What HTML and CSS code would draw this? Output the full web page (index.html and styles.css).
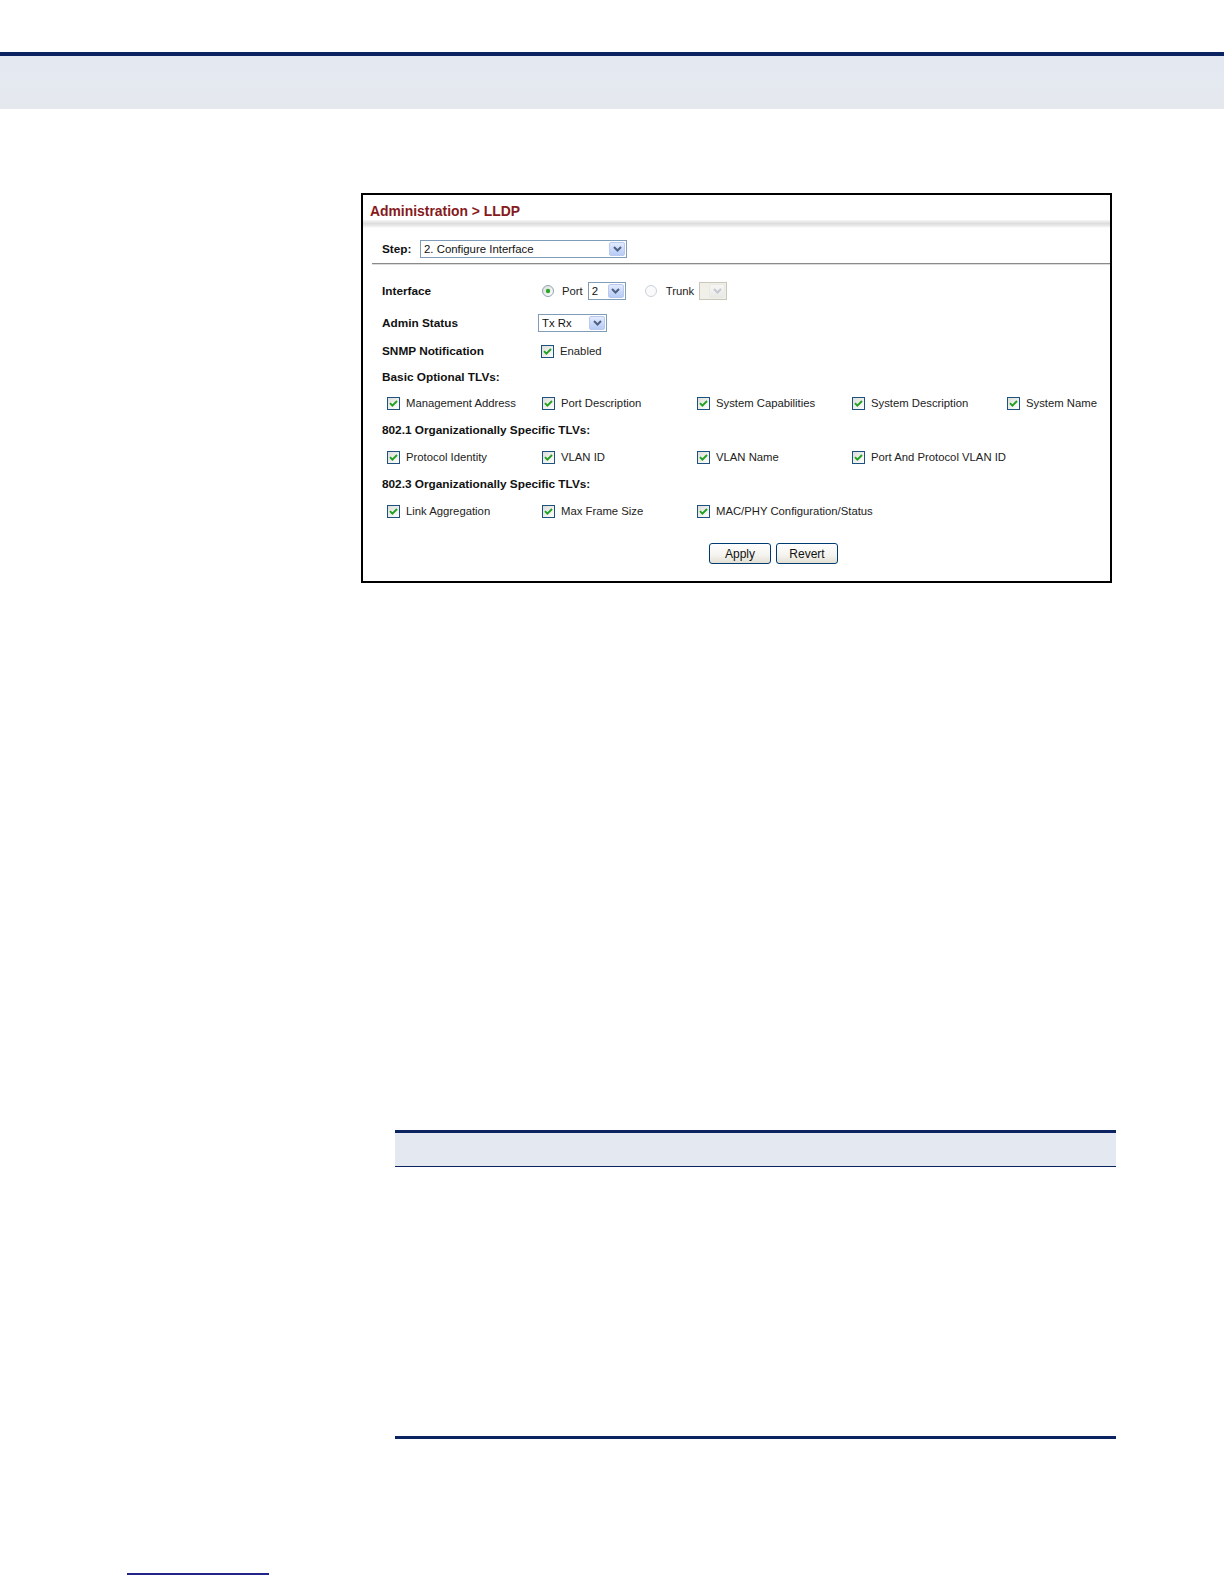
FILE: index.html
```html
<!DOCTYPE html>
<html lang="en">
<head>
<meta charset="utf-8">
<title>Administration &gt; LLDP</title>
<link rel="stylesheet" href="styles.css">
</head>
<body>
<header class="page-head"></header>

<figure class="shot">
  <div class="shot-title">Administration &gt; LLDP</div>
  <div class="shot-shadow"></div>
  <div class="step-row">
    <span class="lbl step-lbl">Step:</span>
    <div class="select sel-step"><span class="sel-text">2. Configure Interface</span><span class="sel-btn"><svg width="9" height="6" viewBox="0 0 9 6"><path d="M1 1 L4.5 4.5 L8 1" fill="none" stroke="#4d6185" stroke-width="2"/></svg></span></div>
  </div>
  <div class="sep"></div>

  <div class="form">
    <div class="row">
      <span class="lbl">Interface</span>
      <div class="ctrl iface">
        <svg class="radio" width="12" height="12" viewBox="0 0 12 12"><defs><linearGradient id="rg" x1="0" y1="0" x2="1" y2="1"><stop offset="0" stop-color="#dcdcd7"/><stop offset="1" stop-color="#ffffff"/></linearGradient></defs><circle cx="6" cy="6" r="5.5" fill="url(#rg)" stroke="#8ea3b7"/><circle cx="6" cy="6" r="2.2" fill="#2fa52f"/></svg>
        <span class="txt port-txt">Port</span>
        <div class="select sel-port"><span class="sel-text">2</span><span class="sel-btn"><svg width="9" height="6" viewBox="0 0 9 6"><path d="M1 1 L4.5 4.5 L8 1" fill="none" stroke="#4d6185" stroke-width="2"/></svg></span></div>
        <svg class="radio radio-off" width="12" height="12" viewBox="0 0 12 12"><circle cx="6" cy="6" r="5.5" fill="#fafafa" stroke="#c9d2dc"/></svg>
        <span class="txt trunk-txt">Trunk</span>
        <div class="select sel-trunk"><span class="sel-text"></span><span class="sel-btn sel-btn-off"><svg width="9" height="6" viewBox="0 0 9 6"><path d="M1 1 L4.5 4.5 L8 1" fill="none" stroke="#c4c8d0" stroke-width="2"/></svg></span></div>
      </div>
    </div>

    <div class="row r-admin">
      <span class="lbl">Admin Status</span>
      <div class="ctrl">
        <div class="select sel-admin"><span class="sel-text">Tx Rx</span><span class="sel-btn"><svg width="9" height="6" viewBox="0 0 9 6"><path d="M1 1 L4.5 4.5 L8 1" fill="none" stroke="#4d6185" stroke-width="2"/></svg></span></div>
      </div>
    </div>

    <div class="row r-snmp">
      <span class="lbl">SNMP Notification</span>
      <div class="ctrl snmp">
        <label class="chk"><svg width="13" height="13" viewBox="0 0 13 13"><defs><linearGradient id="cg" x1="0" y1="0" x2="1" y2="1"><stop offset="0" stop-color="#dcdcd7"/><stop offset="1" stop-color="#ffffff"/></linearGradient></defs><rect x="0.5" y="0.5" width="12" height="12" fill="url(#cg)" stroke="#1c5180"/><polyline points="3,6.2 5.4,8.6 10,4" fill="none" stroke="#21a121" stroke-width="1.9"/></svg><span class="txt">Enabled</span></label>
      </div>
    </div>

    <div class="row heading"><span class="lbl">Basic Optional TLVs:</span></div>
    <div class="row checks">
      <label class="chk"><svg width="13" height="13" viewBox="0 0 13 13"><rect x="0.5" y="0.5" width="12" height="12" fill="url(#cg)" stroke="#1c5180"/><polyline points="3,6.2 5.4,8.6 10,4" fill="none" stroke="#21a121" stroke-width="1.9"/></svg><span class="txt">Management Address</span></label>
      <label class="chk"><svg width="13" height="13" viewBox="0 0 13 13"><rect x="0.5" y="0.5" width="12" height="12" fill="url(#cg)" stroke="#1c5180"/><polyline points="3,6.2 5.4,8.6 10,4" fill="none" stroke="#21a121" stroke-width="1.9"/></svg><span class="txt">Port Description</span></label>
      <label class="chk"><svg width="13" height="13" viewBox="0 0 13 13"><rect x="0.5" y="0.5" width="12" height="12" fill="url(#cg)" stroke="#1c5180"/><polyline points="3,6.2 5.4,8.6 10,4" fill="none" stroke="#21a121" stroke-width="1.9"/></svg><span class="txt">System Capabilities</span></label>
      <label class="chk"><svg width="13" height="13" viewBox="0 0 13 13"><rect x="0.5" y="0.5" width="12" height="12" fill="url(#cg)" stroke="#1c5180"/><polyline points="3,6.2 5.4,8.6 10,4" fill="none" stroke="#21a121" stroke-width="1.9"/></svg><span class="txt">System Description</span></label>
      <label class="chk"><svg width="13" height="13" viewBox="0 0 13 13"><rect x="0.5" y="0.5" width="12" height="12" fill="url(#cg)" stroke="#1c5180"/><polyline points="3,6.2 5.4,8.6 10,4" fill="none" stroke="#21a121" stroke-width="1.9"/></svg><span class="txt">System Name</span></label>
    </div>

    <div class="row heading h-gap"><span class="lbl">802.1 Organizationally Specific TLVs:</span></div>
    <div class="row checks h-gap">
      <label class="chk"><svg width="13" height="13" viewBox="0 0 13 13"><rect x="0.5" y="0.5" width="12" height="12" fill="url(#cg)" stroke="#1c5180"/><polyline points="3,6.2 5.4,8.6 10,4" fill="none" stroke="#21a121" stroke-width="1.9"/></svg><span class="txt">Protocol Identity</span></label>
      <label class="chk"><svg width="13" height="13" viewBox="0 0 13 13"><rect x="0.5" y="0.5" width="12" height="12" fill="url(#cg)" stroke="#1c5180"/><polyline points="3,6.2 5.4,8.6 10,4" fill="none" stroke="#21a121" stroke-width="1.9"/></svg><span class="txt">VLAN ID</span></label>
      <label class="chk"><svg width="13" height="13" viewBox="0 0 13 13"><rect x="0.5" y="0.5" width="12" height="12" fill="url(#cg)" stroke="#1c5180"/><polyline points="3,6.2 5.4,8.6 10,4" fill="none" stroke="#21a121" stroke-width="1.9"/></svg><span class="txt">VLAN Name</span></label>
      <label class="chk"><svg width="13" height="13" viewBox="0 0 13 13"><rect x="0.5" y="0.5" width="12" height="12" fill="url(#cg)" stroke="#1c5180"/><polyline points="3,6.2 5.4,8.6 10,4" fill="none" stroke="#21a121" stroke-width="1.9"/></svg><span class="txt">Port And Protocol VLAN ID</span></label>
    </div>

    <div class="row heading h-gap"><span class="lbl">802.3 Organizationally Specific TLVs:</span></div>
    <div class="row checks h-gap">
      <label class="chk"><svg width="13" height="13" viewBox="0 0 13 13"><rect x="0.5" y="0.5" width="12" height="12" fill="url(#cg)" stroke="#1c5180"/><polyline points="3,6.2 5.4,8.6 10,4" fill="none" stroke="#21a121" stroke-width="1.9"/></svg><span class="txt">Link Aggregation</span></label>
      <label class="chk"><svg width="13" height="13" viewBox="0 0 13 13"><rect x="0.5" y="0.5" width="12" height="12" fill="url(#cg)" stroke="#1c5180"/><polyline points="3,6.2 5.4,8.6 10,4" fill="none" stroke="#21a121" stroke-width="1.9"/></svg><span class="txt">Max Frame Size</span></label>
      <label class="chk"><svg width="13" height="13" viewBox="0 0 13 13"><rect x="0.5" y="0.5" width="12" height="12" fill="url(#cg)" stroke="#1c5180"/><polyline points="3,6.2 5.4,8.6 10,4" fill="none" stroke="#21a121" stroke-width="1.9"/></svg><span class="txt">MAC/PHY Configuration/Status</span></label>
    </div>

    <div class="buttons">
      <button class="btn" type="button">Apply</button>
      <button class="btn" type="button">Revert</button>
    </div>
  </div>
</figure>

<section class="tbl">
  <div class="tbl-head"></div>
  <div class="tbl-body"></div>
</section>

<div class="foot-rule"></div>
</body>
</html>
```

FILE: styles.css
```css
* { box-sizing: border-box; }

body {
  margin: 0;
  background: #ffffff;
  font-family: "Liberation Sans", Arial, sans-serif;
  color: #000;
}

.page-head {
  margin-top: 52px;
  height: 57px;
  border-top: 4px solid #0b2461;
  background: linear-gradient(to bottom, #e4e8f1, #e5e9ee);
}

/* ---------- screenshot frame ---------- */
.shot {
  margin: 84px 0 0 361px;
  width: 751px;
  height: 390px;
  border: 2px solid #000;
  background: #fff;
}

.shot-title {
  display: flex;
  align-items: center;
  height: 25px;
  padding: 7px 0 0 7px;
  font-size: 13.9px;
  font-weight: bold;
  color: #86191c;
  white-space: nowrap;
}

.shot-shadow {
  height: 8px;
  background: linear-gradient(to bottom, #f6f6f6, #dcdcdc 45%, #ececec 75%, #ffffff);
}

.step-row {
  display: flex;
  align-items: center;
  height: 35px;
  padding: 6px 0 0 19px;
}

.lbl {
  font-size: 11.8px;
  font-weight: bold;
  color: #111;
  white-space: nowrap;
}

.step-lbl { width: 38px; }

.sep {
  margin-left: 9px;
  height: 1px;
  background: #8a8a8a;
  box-shadow: 0 1px 0 #dcdcdc;
}

/* ---------- selects ---------- */
.select {
  display: flex;
  align-items: center;
  height: 18px;
  border: 1px solid #7f9db9;
  background: #fff;
}

.sel-text {
  flex: 1;
  padding-left: 3px;
  font-size: 11.4px;
  color: #111;
  white-space: nowrap;
}

.sel-btn {
  display: flex;
  align-items: center;
  justify-content: center;
  width: 16px;
  height: 14px;
  margin-right: 1px;
  border: 1px solid #b9c9ef;
  border-radius: 2px;
  background: linear-gradient(to bottom, #e2eafe, #b6cbf6);
}

.sel-btn-off {
  border-color: #e8e8e4;
  background: linear-gradient(to bottom, #f6f6f3, #e8e8e4);
}

.sel-step { width: 207px; }
.sel-port { width: 38px; margin-left: 5px; }
.sel-trunk {
  width: 28px;
  margin-left: 5px;
  border-color: #c9c7ba;
  background: #f0efe8;
}
.sel-admin { width: 69px; }

/* ---------- form ---------- */
.form {
  padding: 14px 0 0 19px;
}

.row {
  display: grid;
  grid-template-columns: 156px auto;
  align-items: center;
  height: 26px;
}

.r-admin { margin-top: 6px; }
.r-snmp { margin-top: 2px; }
.h-gap { margin-top: 1px; }

.heading { grid-template-columns: auto; }

.ctrl {
  display: flex;
  align-items: center;
}

.iface .radio { margin-left: 4px; }
.iface .radio-off { margin-left: 19px; }
.port-txt { margin-left: 8px; }
.trunk-txt { margin-left: 9px; }

.snmp { padding-left: 3px; }

.txt {
  font-size: 11.3px;
  color: #222;
  white-space: nowrap;
}

.chk {
  display: flex;
  align-items: center;
  gap: 6px;
}

.chk svg { flex: none; }

.checks {
  grid-template-columns: repeat(5, 155px);
  padding-left: 5px;
}

.buttons {
  display: flex;
  gap: 5px;
  margin: 19px 0 0 327px;
}

.btn {
  width: 62px;
  height: 21px;
  padding: 0;
  border: 1px solid #003c74;
  border-radius: 3px;
  background: linear-gradient(to bottom, #ffffff, #f4f3ee 60%, #e2dfd2);
  font-family: "Liberation Sans", Arial, sans-serif;
  font-size: 12px;
  color: #111;
}

/* ---------- lower table ---------- */
.tbl {
  margin: 547px 0 0 395px;
  width: 721px;
}

.tbl-head {
  height: 37px;
  border-top: 3px solid #0b2461;
  border-bottom: 1px solid #0b2461;
  background: #e4e8f0;
}

.tbl-body {
  height: 272px;
  border-bottom: 3px solid #0b2461;
}

.foot-rule {
  margin: 134px 0 0 127px;
  width: 142px;
  height: 2px;
  background: #23238c;
}
```
